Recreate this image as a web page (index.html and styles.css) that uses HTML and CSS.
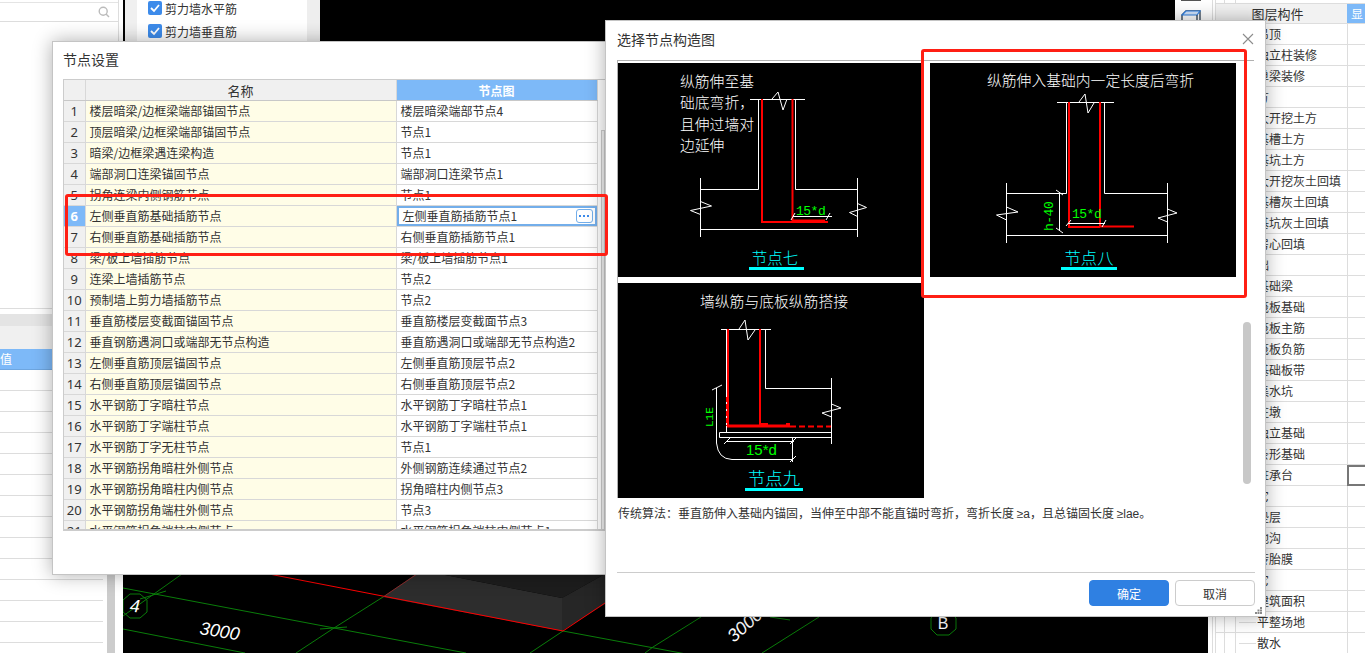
FILE: index.html
```html
<!DOCTYPE html>
<html lang="zh-CN">
<head>
<meta charset="utf-8">
<title>节点设置</title>
<link rel="stylesheet" href="styles.css">
</head>
<body>
<div class="desktop">

  <!-- background application -->
  <aside class="left-col">
    <div class="left-top">
      <div class="search">
        <svg class="search-icon" viewBox="0 0 12 12" width="12" height="12"><circle cx="5.2" cy="5.2" r="4" fill="none" stroke="#bbb" stroke-width="1.4"/><path d="M8 8l3 3" stroke="#bbb" stroke-width="1.4"/></svg>
      </div>
    </div>
    <div class="left-bottom">
      <div class="props">
        <div class="band"></div>
        <div class="band-2"></div>
        <div class="prop-head">值</div>
        <div class="prop-row"></div><div class="prop-row"></div><div class="prop-row"></div><div class="prop-row"></div>
        <div class="prop-row"></div><div class="prop-row"></div><div class="prop-row"></div><div class="prop-row"></div>
        <div class="prop-row"></div><div class="prop-row"></div><div class="prop-row"></div><div class="prop-row"></div>
        <div class="prop-row"></div><div class="prop-row"></div>
      </div>
      <div class="left-strip"></div>
    </div>
  </aside>

  <main class="viewport">
    <svg class="scene" viewBox="123 0 1085 653" width="1085" height="653">
      <polygon points="416,574 383,597 562,631 562,598 440,574" fill="#2d2d2d"/>
      <polygon points="440,574 562,598 605,574" fill="#1d1d1d"/>
      <polygon points="562,598 605,574 605,604 562,631" fill="#262626"/>
      <g class="g-line">
        <path d="M123 588L466 653"/>
        <path d="M123 629L245 653"/>
        <path d="M182 574L123 616"/>
        <path d="M383 597L334 628L296 653"/>
        <path d="M563 631L530 653"/>
        <path d="M563 631L697 656"/>
        <path d="M701 617L653 647L645 653"/>
        <path d="M819 617L762 653"/>
        <path d="M140 599L166 591"/>
        <path d="M320 629L347 627"/>
        <path d="M770 617L790 620"/>
        <polygon points="130,594 140,594 147,600 147,612 140,618 130,618 123,612 123,600"/>
        <polygon points="937,611 949,611 956,618 956,629 949,635 937,635 931,629 931,618"/>
      </g>
      <path class="r-line" d="M269 574L563 631L605 603"/>
      <path class="r-dim" d="M417 574L383 597"/>
      <text class="scene-text" x="135" y="612" text-anchor="middle" transform="rotate(4 135 606)">4</text>
      <text class="scene-text" x="199" y="634" transform="rotate(9 199 634)">3000</text>
      <text class="scene-text" x="734" y="643" transform="rotate(-42 734 643)">3000</text>
      <text class="scene-b" x="943" y="629" text-anchor="middle">B</text>
    </svg>

    <div class="check-panel">
      <div class="check-list">
        <label class="check-item"><span class="box"><svg viewBox="0 0 14 14" width="14" height="14"><path d="M3 7l3 3 5-6" fill="none" stroke="#fff" stroke-width="1.8"/></svg></span>剪力墙水平筋</label>
        <label class="check-item"><span class="box"><svg viewBox="0 0 14 14" width="14" height="14"><path d="M3 7l3 3 5-6" fill="none" stroke="#fff" stroke-width="1.8"/></svg></span>剪力墙垂直筋</label>
      </div>
    </div>

    <div class="view-tools">
      <span class="tool-bar"></span>
      <svg class="tool-icon" viewBox="0 0 20 10" width="20" height="10"><path d="M1 10V5L5 1H19V10" fill="none" stroke="#3a4a5c" stroke-width="1.4"/><path d="M1 5L5 1H19L16 5Z" fill="#cfe2fb" stroke="#2f7fe0" stroke-width="1.2"/><path d="M16 5V10" stroke="#3a4a5c" stroke-width="1.4"/></svg>
    </div>
  </main>

  <aside class="layers">
    <div class="layer-head"><span class="layer-title">图层构件</span><span class="layer-show">显</span></div>
    <div class="layer-row item"><span class="layer-name">吊顶</span><span class="layer-val"></span></div>
    <div class="layer-row item"><span class="layer-name">独立柱装修</span><span class="layer-val"></span></div>
    <div class="layer-row item"><span class="layer-name">单梁装修</span><span class="layer-val"></span></div>
    <div class="layer-row group"><span class="layer-name">土方</span><span class="layer-val"></span></div>
    <div class="layer-row item"><span class="layer-name">大开挖土方</span><span class="layer-val"></span></div>
    <div class="layer-row item"><span class="layer-name">基槽土方</span><span class="layer-val"></span></div>
    <div class="layer-row item"><span class="layer-name">基坑土方</span><span class="layer-val"></span></div>
    <div class="layer-row item"><span class="layer-name">大开挖灰土回填</span><span class="layer-val"></span></div>
    <div class="layer-row item"><span class="layer-name">基槽灰土回填</span><span class="layer-val"></span></div>
    <div class="layer-row item"><span class="layer-name">基坑灰土回填</span><span class="layer-val"></span></div>
    <div class="layer-row item"><span class="layer-name">房心回填</span><span class="layer-val"></span></div>
    <div class="layer-row group"><span class="layer-name">基础</span><span class="layer-val"></span></div>
    <div class="layer-row item"><span class="layer-name">基础梁</span><span class="layer-val"></span></div>
    <div class="layer-row item"><span class="layer-name">筏板基础</span><span class="layer-val"></span></div>
    <div class="layer-row item"><span class="layer-name">筏板主筋</span><span class="layer-val"></span></div>
    <div class="layer-row item"><span class="layer-name">筏板负筋</span><span class="layer-val"></span></div>
    <div class="layer-row item"><span class="layer-name">基础板带</span><span class="layer-val"></span></div>
    <div class="layer-row item"><span class="layer-name">集水坑</span><span class="layer-val"></span></div>
    <div class="layer-row item"><span class="layer-name">柱墩</span><span class="layer-val"></span></div>
    <div class="layer-row item"><span class="layer-name">独立基础</span><span class="layer-val"></span></div>
    <div class="layer-row item"><span class="layer-name">条形基础</span><span class="layer-val"></span></div>
    <div class="layer-row item"><span class="layer-name">桩承台</span><span class="layer-val current"></span></div>
    <div class="layer-row group"><span class="layer-name">其它</span><span class="layer-val"></span></div>
    <div class="layer-row item"><span class="layer-name">垫层</span><span class="layer-val"></span></div>
    <div class="layer-row item"><span class="layer-name">地沟</span><span class="layer-val"></span></div>
    <div class="layer-row item"><span class="layer-name">砖胎膜</span><span class="layer-val"></span></div>
    <div class="layer-row group"><span class="layer-name">其它</span><span class="layer-val"></span></div>
    <div class="layer-row item"><span class="layer-name">建筑面积</span><span class="layer-val"></span></div>
    <div class="layer-row item branch"><span class="layer-name">平整场地</span><span class="layer-val"></span></div>
    <div class="layer-row item branch"><span class="layer-name">散水</span><span class="layer-val"></span></div>
  </aside>

  <!-- node settings window -->
  <section class="win win-settings">
    <h2 class="win-title">节点设置</h2>
    <div class="grid-wrap">
      <table class="grid">
        <thead><tr><th class="idx"></th><th class="name-h">名称</th><th class="node-h">节点图</th></tr></thead>
        <tbody>
          <tr><td class="idx">1</td><td class="nm">楼层暗梁/边框梁端部锚固节点</td><td class="vl">楼层暗梁端部节点4</td></tr>
          <tr><td class="idx">2</td><td class="nm">顶层暗梁/边框梁端部锚固节点</td><td class="vl">节点1</td></tr>
          <tr><td class="idx">3</td><td class="nm">暗梁/边框梁遇连梁构造</td><td class="vl">节点1</td></tr>
          <tr><td class="idx">4</td><td class="nm">端部洞口连梁锚固节点</td><td class="vl">端部洞口连梁节点1</td></tr>
          <tr><td class="idx">5</td><td class="nm">拐角连梁内侧钢筋节点</td><td class="vl">节点1</td></tr>
          <tr><td class="idx on">6</td><td class="nm">左侧垂直筋基础插筋节点</td><td class="vl editing"><span class="edit-cell"><span>左侧垂直筋插筋节点1</span><span class="more"><i></i><i></i><i></i></span></span></td></tr>
          <tr><td class="idx">7</td><td class="nm">右侧垂直筋基础插筋节点</td><td class="vl">右侧垂直筋插筋节点1</td></tr>
          <tr><td class="idx">8</td><td class="nm">梁/板上墙插筋节点</td><td class="vl">梁/板上墙插筋节点1</td></tr>
          <tr><td class="idx">9</td><td class="nm">连梁上墙插筋节点</td><td class="vl">节点2</td></tr>
          <tr><td class="idx">10</td><td class="nm">预制墙上剪力墙插筋节点</td><td class="vl">节点2</td></tr>
          <tr><td class="idx">11</td><td class="nm">垂直筋楼层变截面锚固节点</td><td class="vl">垂直筋楼层变截面节点3</td></tr>
          <tr><td class="idx">12</td><td class="nm">垂直钢筋遇洞口或端部无节点构造</td><td class="vl">垂直筋遇洞口或端部无节点构造2</td></tr>
          <tr><td class="idx">13</td><td class="nm">左侧垂直筋顶层锚固节点</td><td class="vl">左侧垂直筋顶层节点2</td></tr>
          <tr><td class="idx">14</td><td class="nm">右侧垂直筋顶层锚固节点</td><td class="vl">右侧垂直筋顶层节点2</td></tr>
          <tr><td class="idx">15</td><td class="nm">水平钢筋丁字暗柱节点</td><td class="vl">水平钢筋丁字暗柱节点1</td></tr>
          <tr><td class="idx">16</td><td class="nm">水平钢筋丁字端柱节点</td><td class="vl">水平钢筋丁字端柱节点1</td></tr>
          <tr><td class="idx">17</td><td class="nm">水平钢筋丁字无柱节点</td><td class="vl">节点1</td></tr>
          <tr><td class="idx">18</td><td class="nm">水平钢筋拐角暗柱外侧节点</td><td class="vl">外侧钢筋连续通过节点2</td></tr>
          <tr><td class="idx">19</td><td class="nm">水平钢筋拐角暗柱内侧节点</td><td class="vl">拐角暗柱内侧节点3</td></tr>
          <tr><td class="idx">20</td><td class="nm">水平钢筋拐角端柱外侧节点</td><td class="vl">节点3</td></tr>
          <tr><td class="idx">21</td><td class="nm">水平钢筋拐角端柱内侧节点</td><td class="vl">水平钢筋拐角端柱内侧节点1</td></tr>
        </tbody>
      </table>
      <div class="grid-scroll"></div>
    </div>
  </section>

  <!-- node picture window -->
  <section class="win win-picker">
    <h2 class="picker-title">选择节点构造图</h2>
    <svg class="close" viewBox="0 0 12 12" width="12" height="12"><path d="M1 1l10 10M11 1L1 11" stroke="#8c8c8c" stroke-width="1.1"/></svg>
    <div class="pic-panel">
      <div class="pic-grid">

        <svg class="pic" viewBox="618 63 306 214">
          <g class="cad-text">
            <text x="680" y="87">纵筋伸至基</text>
            <text x="680" y="108">础底弯折，</text>
            <text x="680" y="130">且伸过墙对</text>
            <text x="680" y="151">边延伸</text>
          </g>
          <path class="w" d="M750 99.5H805M772 99L778 92L783 110L787 99"/>
          <path class="w" d="M758.5 99V189.5H700.5M795.5 99V189.5H857.5"/>
          <path class="w" d="M700.5 178V237M857.5 178V237M700.5 229.5H857.5"/>
          <path class="w" d="M690.5 210.5L700.5 214.5V201.5L711.5 206L690.5 210.5M849.5 212.5L857.5 216.5V203.5L866.5 207.5L849.5 212.5"/>
          <path class="r2" d="M762 99V222H828M792.5 99V222"/>
          <path class="r3" d="M793 221H825"/>
          <path class="w" d="M793 216.5H832M795 213L791 220M830 213L826 220"/>
          <text class="dim" x="796" y="215">15*d</text>
          <text class="cap" x="775" y="264" text-anchor="middle">节点七</text>
          <rect class="cap-line" x="749" y="267" width="55" height="3"/>
        </svg>

        <svg class="pic" viewBox="930 63 306 214">
          <text class="cad-text" x="987" y="86">纵筋伸入基础内一定长度后弯折</text>
          <path class="w" d="M1057 102.5H1114M1079 102L1085 94L1088 113L1094 103"/>
          <path class="w" d="M1066.5 102V193.5H1006.5M1104.5 102V193.5H1167.5"/>
          <path class="w" d="M1006.5 183V243M1167.5 183V243M1006.5 235.5H1167.5"/>
          <path class="w" d="M996.5 215L1006.5 220V207L1018 212L996.5 215M1158 218L1167.5 222V209L1177 213L1158 218"/>
          <path class="r2" d="M1069 102V227H1100M1100 102V227M1100 226.5H1134"/>
          <path class="w" d="M1059.5 192V231M1056 190L1063 195M1056 228L1063 233M1068 223.5H1105M1071 220L1066 226M1106 220L1102 227"/>
          <text class="dim" x="1072" y="218">15*d</text>
          <text class="dim" x="1053" y="231" transform="rotate(-90 1053 231)">h-40</text>
          <text class="cap cap-8" x="1089" y="264" text-anchor="middle">节点八</text>
          <rect class="cap-line" x="1061" y="267" width="56" height="3"/>
        </svg>

        <svg class="pic" viewBox="618 283 306 215">
          <text class="cad-text" x="700" y="307">墙纵筋与底板纵筋搭接</text>
          <path class="w" d="M721 329.5H771M739 329L745 320L748 340L755 330"/>
          <path class="w" d="M726.5 329V432M765.5 329V388.5H831.5M831.5 378V444"/>
          <path class="w" d="M719.5 432.5H831.5V437.5H719.5Z"/>
          <path class="w" d="M822 413L831.5 417V404L841 408L822 413"/>
          <path class="r2" d="M728 329V426M760 329V426"/>
          <path class="r3" d="M727 426H790"/>
          <path class="r-dash" d="M790 426.5H831"/>
          <path class="r-dash2" d="M727 397V426"/>
          <rect class="fill-r" x="760" y="423" width="8" height="4"/>
          <rect class="fill-r" x="786" y="423" width="4" height="4"/>
          <path class="w" d="M727 441.5H794M792.5 437V462M724 444L730 438M790 444L796 438M790 462L796 456"/>
          <path class="w-fine" d="M716.5 388V443Q718 459 732 459.5H792M712 390L722 385"/>
          <text class="dim-lg" x="746" y="455">15*d</text>
          <text class="dim-sm" x="713" y="427" transform="rotate(-90 713 427)">L1E</text>
          <text class="cap cap-9" x="774" y="485" text-anchor="middle">节点九</text>
          <rect class="cap-line" x="745" y="488" width="58" height="3"/>
        </svg>

      </div>
      <div class="pic-scroll"></div>
    </div>
    <p class="desc">传统算法：垂直筋伸入基础内锚固，当伸至中部不能直锚时弯折，弯折长度 <span class="latin">≥a</span>，且总锚固长度 <span class="latin">≥lae</span>。</p>
    <div class="foot">
      <button class="btn primary">确定</button>
      <button class="btn">取消</button>
    </div>
    <svg class="grip" viewBox="0 0 7 7" width="7" height="7"><path d="M5 0h2v2H5zM2.5 2.5h2v2h-2zM5 2.5h2v2H5zM0 5h2v2H0zM2.5 5h2v2h-2zM5 5h2v2H5z" fill="#8a8a8a"/></svg>
  </section>

  <!-- annotations -->
  <div class="mark mark-rows"></div>
  <div class="mark mark-node"></div>
</div>
</body>
</html>
```

FILE: styles.css
```css
* { box-sizing: border-box; }
html, body { margin: 0; padding: 0; height: 100%; overflow: hidden; background: #fff; }
body { font-family: "Noto Sans CJK SC", "Noto Sans", sans-serif; font-size: 12px; color: #333; }

.desktop { position: relative; width: 1365px; height: 653px; overflow: hidden; display: flex; background: #fff; }

/* background: left column */
.left-col { width: 123px; flex: none; display: flex; flex-direction: column; background: #fff; }
.left-top { height: 309px; flex: none; width: 119px; border-right: 1px solid #ddd; border-bottom: 1px solid #ddd; padding-top: 2px; }
.search { height: 20px; border-top: 1px solid #e4e4e4; border-bottom: 1px solid #ddd; display: flex; align-items: center; justify-content: flex-end; padding-right: 8px; }
.left-bottom { flex: 1; display: flex; min-height: 0; }
.props { width: 103px; flex: none; }
.band { height: 5px; }
.band-2 { height: 35px; background: linear-gradient(#e4e4e4 0, #e4e4e4 12px, #f0f0f0 12px); }
.prop-head { height: 21px; background: #7db9f8; border-bottom: 1px solid #6ea6e0; color: #fff; font-size: 12px; line-height: 20px; }
.prop-row { height: 21px; border-bottom: 1px solid #ddd; }
.left-strip { width: 8px; margin-left: 4px; background: #ccc; }

/* background: viewport */
.viewport { position: relative; width: 1085px; flex: none; background: #000; overflow: hidden; }
.scene { display: block; }
.g-line path, .g-line polygon { fill: none; stroke: #0a7d0a; stroke-width: 1; }
.r-line { fill: none; stroke: #f00; stroke-width: 1; }
.r-dim { fill: none; stroke: #8a2a2a; stroke-width: 1; }
.scene-text { font-family: "Liberation Sans", sans-serif; font-size: 18px; font-style: italic; fill: #fff; }
.scene-b { font-family: "Liberation Sans", sans-serif; font-size: 16px; fill: #fff; }
.check-panel { position: absolute; left: 2px; top: 0; width: 195px; height: 60px; padding-left: 12px; background: #f0f0f0; border-right: 13px solid #eee; }
.check-list { height: 100%; background: #fff; padding-left: 11px; display: flex; flex-direction: column; gap: 9px; padding-top: 1px; }
.check-item { display: flex; align-items: center; gap: 3px; height: 14px; color: #333; white-space: nowrap; }
.box { width: 14px; height: 14px; border-radius: 2px; background: #3d8bea; display: block; }
.box svg { display: block; }
.view-tools { position: absolute; right: 0; top: 0; width: 33px; height: 24px; background: #fff; padding: 0 0 0 6px; }
.tool-bar { display: block; width: 20px; height: 1px; background: #555; margin-bottom: 9px; }
.tool-icon { display: block; }

/* background: right layers */
.layers { flex: 1; min-width: 0; padding: 3px 0 0 4px; margin-left: 0; border-left: 4px solid #fff;
  background-color: #fff;
  background-image: linear-gradient(#ddd, #ddd), linear-gradient(#ddd, #ddd), linear-gradient(#ddd, #ddd), linear-gradient(#ddd, #ddd);
  background-size: 1px 100%;
  background-repeat: no-repeat;
  background-position: 0 0, 3px 0, 12px 0, 23px 0; }
.layer-head { height: 21px; display: flex; border-bottom: 1px solid #ddd; border-top: 1px solid #ddd; background: #f2f2f2; }
.layer-title { flex: 1; text-align: center; line-height: 19px; font-size: 13px; padding-right: 8px; }
.layer-show { width: 18px; background: #7db9f8; color: #fff; line-height: 19px; font-size: 12px; padding-left: 4px; overflow: hidden; }
.layer-row { position: relative; height: 21px; display: flex; }
.layer-name { flex: 1; min-width: 0; border-bottom: 1px solid #ddd; line-height: 20px; white-space: nowrap; }
.item .layer-name { padding-left: 41px; }
.group .layer-name { padding-left: 29px; }
.layer-val { width: 18px; flex: none; border-bottom: 1px solid #ddd; border-left: 1px solid #ddd; }
.layer-val.current { border: 2px solid #777; border-right: 0; }
.branch::before { content: ""; position: absolute; left: 23px; top: 10px; width: 17px; border-top: 1px solid #ddd; }

/* windows */
.win { position: absolute; background: #fff; border: 1px solid #c4c4c4; box-shadow: 0 0 18px rgba(0, 0, 0, 0.32); }
.win-settings { left: 52px; top: 41px; width: 560px; height: 534px; padding: 0 0 0 10px; }
.win-title { margin: 0; font-weight: 400; font-size: 14px; height: 37px; line-height: 35px; color: #333; }
.grid-wrap { position: relative; width: 543px; height: 452px; overflow: hidden; border-top: 1px solid #ccc; border-left: 1px solid #ccc; border-bottom: 2px solid #ccc; }
.grid { border-collapse: collapse; table-layout: fixed; width: 533px; }
.grid th, .grid td { height: 21px; padding: 0; font-weight: 400; border-right: 1px solid #d8d8d8; border-bottom: 1px solid #d8d8d8; white-space: nowrap; overflow: hidden; line-height: 20px; }
.grid th { background: #f0f0f0; font-size: 13px; border-bottom-color: #c8c8c8; height: 20px; padding-top: 2px; line-height: 18px; }
.grid th.idx { width: 21px; }
.grid th.name-h { width: 311px; }
.grid th.node-h { width: 201px; background: #7db9f8; color: #fff; font-weight: 700; font-size: 12px; }
.grid td.idx { background: #f0f0f0; text-align: center; font-size: 13px; font-family: "Noto Sans", sans-serif; }
.grid td.idx.on { background: #7db9f8; color: #fff; font-weight: 700; }
.grid td.nm { background: #fffde7; padding-left: 4px; }
.grid td.vl { padding-left: 4px; background: #fff; }
.grid td.editing { padding: 0; }
.edit-cell { display: flex; align-items: center; justify-content: space-between; height: 20px; border: 2px solid #73aeea; padding: 0 2px 0 4px; }
.more { width: 17px; height: 14px; margin-bottom: 1px; border: 1px solid #73aeea; border-radius: 3px; display: flex; align-items: center; justify-content: center; gap: 2px; }
.more i { width: 2px; height: 2px; background: #3d8bea; display: block; }
.grid-scroll { position: absolute; right: 1px; top: 50px; width: 4px; bottom: 0; border: 1px solid #ccc; border-bottom: 0; background: #f2f2f2; }

.win-picker { left: 605px; top: 20px; width: 661px; height: 597px; display: flex; flex-direction: column; }
.picker-title { margin: 0; padding-left: 11px; font-weight: 400; font-size: 14px; height: 39px; line-height: 36px; flex: none; }
.close { position: absolute; right: 11px; top: 12px; }
.pic-panel { position: relative; flex: none; margin-left: 11px; width: 637px; height: 438px; border-top: 1px solid #b0b0b0; border-left: 1px solid #b0b0b0; padding-top: 2px; }
.pic-grid { display: grid; grid-template-columns: 306px 306px; grid-template-rows: 214px 215px; gap: 6px; }
.pic { display: block; width: 100%; height: 100%; background: #000; font-family: "Noto Sans CJK SC", sans-serif; }
.pic-scroll { position: absolute; left: 625px; top: 261px; width: 8px; height: 162px; border-radius: 4px; background: #c8c8c8; }
.desc { margin: 7px 0 0; padding-left: 12px; font-size: 12px; line-height: 16px; height: 67px; flex: none; white-space: nowrap; }
.latin { font-family: "Liberation Sans", sans-serif; }
.foot { flex: none; margin-left: 11px; width: 638px; border-top: 1px solid #ccc; padding-top: 7px; display: flex; justify-content: flex-end; gap: 6px; }
.btn { width: 80px; height: 26px; border-radius: 4px; border: 1px solid #ccc; background: #fff; color: #333; font: 12px "Noto Sans CJK SC", sans-serif; padding: 0; }
.btn.primary { background: #2f80e2; border-color: #2f80e2; color: #fff; }
.grip { position: absolute; right: 3px; bottom: 2px; }

/* CAD drawing strokes */
.w { fill: none; stroke: #fff; stroke-width: 1; }
.w-fine { fill: none; stroke: #fff; stroke-width: 1; }
.r2 { fill: none; stroke: #f00; stroke-width: 2; }
.r3 { fill: none; stroke: #f00; stroke-width: 3; }
.r-dash { fill: none; stroke: #f00; stroke-width: 2; stroke-dasharray: 6 3; }
.r-dash2 { fill: none; stroke: #f00; stroke-width: 2; stroke-dasharray: 5 2; }
.fill-r { fill: #f00; }
.cad-text { fill: #fff; font-size: 14.8px; font-weight: 300; }
.dim { fill: #0f0; font-size: 13px; font-family: "Liberation Mono", monospace; letter-spacing: -0.5px; }
.dim-lg { fill: #0f0; font-size: 15px; font-family: "Liberation Sans", sans-serif; }
.dim-sm { fill: #0f0; font-size: 11px; font-family: "Liberation Mono", monospace; }
.cap { fill: #0ff; font-size: 15.5px; font-weight: 300; }
.cap-8 { font-size: 16.3px; }
.cap-9 { font-size: 17.3px; }
.cap-line { fill: #0ff; }

/* red annotation rectangles */
.mark { position: absolute; border: 3px solid #ff1f14; border-radius: 3px; pointer-events: none; }
.mark-rows { left: 65px; top: 194px; width: 543px; height: 62px; }
.mark-node { left: 921px; top: 49px; width: 326px; height: 249px; }
```
